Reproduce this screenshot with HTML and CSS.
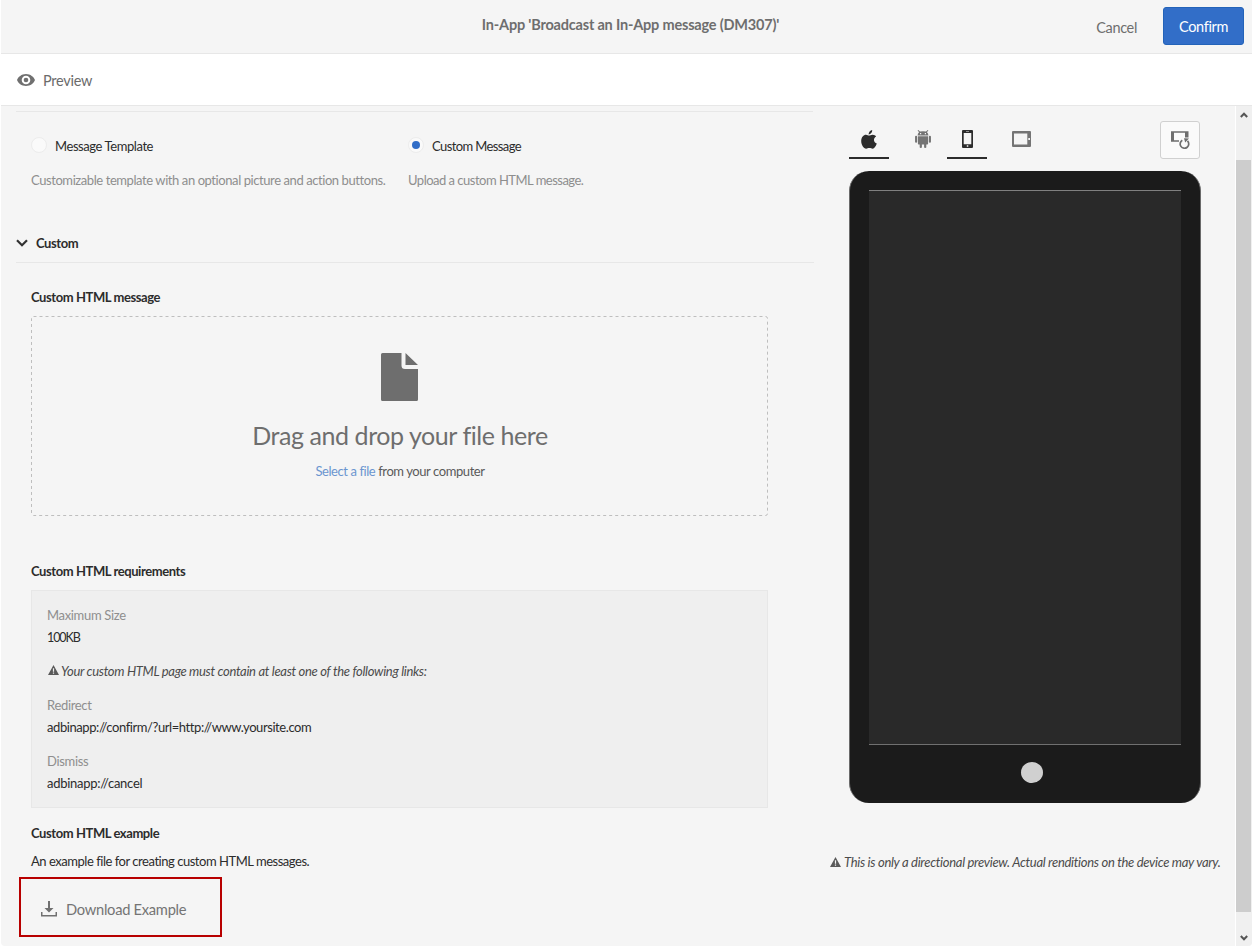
FILE: index.html
```html
<!DOCTYPE html>
<html lang="en">
<head>
<meta charset="utf-8">
<title>In-App message</title>
<link rel="stylesheet" href="styles.css">
</head>
<body>
<div class="frame">
  <header class="header">
    <h1 class="title"><span>In-App 'Broadcast an In-App message (DM307)'</span></h1>
    <div class="actions">
      <button class="cancel">Cancel</button>
      <button class="confirm">Confirm</button>
    </div>
  </header>
  <nav class="toolbar">
    <svg class="eye" width="18" height="12" viewBox="0 0 18 12"><path fill="#707070" fill-rule="evenodd" d="M9 0C4.600 0 1 3 0 6c1 3 4.600 6 9 6s8-3 9-6c-1-3-4.600-6-9-6zm0 1.700a4.300 4.300 0 1 1 0 8.600a4.300 4.300 0 0 1 0-8.600z"/><circle cx="9" cy="6" r="2.300" fill="#707070"/></svg>
    <span class="preview-label">Preview</span>
  </nav>
  <div class="body">
    <main class="main">
      <div class="choices">
        <label class="choice"><span class="radio"></span><span class="choice-name">Message Template</span></label>
        <label class="choice"><span class="radio on"></span><span class="choice-name cm">Custom Message</span></label>
        <p class="hint tpl">Customizable template with an optional picture and action buttons.</p>
        <p class="hint up">Upload a custom HTML message.</p>
      </div>
      <div class="section">
        <svg class="chev" width="12" height="8" viewBox="0 0 12 8"><path d="M1 1.200l5 5 5-5" fill="none" stroke="#323232" stroke-width="2.200"/></svg>
        <span>Custom</span>
      </div>
      <div class="fields">
        <h2 class="label lm"><span>Custom HTML message</span></h2>
        <div class="drop">
          <svg class="border" width="738" height="201"><rect x=".5" y=".5" width="736" height="199" rx="2" fill="none" stroke="#bebebe" stroke-dasharray="3 3"/></svg>
          <svg class="file" width="37" height="48" viewBox="0 0 37 48"><path fill="#6e6e6e" d="M1.500 0H20.500V12.500Q20.500 16 24 16H37V46.500Q37 48 35.500 48H1.500Q0 48 0 46.500V1.500Q0 0 1.500 0zM24.500 0L37 12H24.500z"/></svg>
          <p class="drag"><span>Drag and drop your file here</span></p>
          <p class="select"><a>Select a file</a> from your computer</p>
        </div>
        <h2 class="label lr"><span>Custom HTML requirements</span></h2>
        <div class="reqs">
          <p class="k k1">Maximum Size</p>
          <p class="v v1">100KB</p>
          <p class="warn w1"><svg width="11" height="10" viewBox="0 0 11 10"><path fill="#5a5a5a" fill-rule="evenodd" d="M5.500 0L11 10H0zM4.900 3.300h1.200v3.400H4.900zM4.900 7.600h1.200v1.200H4.900z"/></svg><span>Your custom HTML page must contain at least one of the following links:</span></p>
          <p class="k k2">Redirect</p>
          <p class="v v2">adbinapp://confirm/?url=http://www.yoursite.com</p>
          <p class="k k3">Dismiss</p>
          <p class="v v3">adbinapp://cancel</p>
        </div>
        <h2 class="label le"><span>Custom HTML example</span></h2>
        <p class="example">An example file for creating custom HTML messages.</p>
      </div>
      <div class="download">
        <svg width="16" height="16" viewBox="0 0 16 16"><path fill="#707070" d="M7 0h2v7h3.500L8 11.500 3.500 7H7zM0 11h1.500v3h13v-3H16v4.500H0z"/></svg>
        <span>Download Example</span>
      </div>
    </main>
    <aside class="side">
      <div class="tabs">
        <div class="tab active"><svg width="16" height="19" viewBox="0 0 16 19"><path fill="#2c2c2c" d="M11.200 0c.2 2.400-1.500 4.300-3.600 4.400C7.500 2.300 9.200.5 11.200 0zM8 5.600c1 0 1.900-.9 3.700-.9 1.500 0 2.700.8 3.400 1.800-3.200 1.900-2.600 5.900.7 7.100-1 2.700-2.400 5.100-4.200 5.100-1.100 0-1.700-.7-3.200-.7s-2.100.7-3.200.7C2.600 18.700.2 14.800.2 11.100c0-3.900 2.400-6.300 4.800-6.300 1.300 0 2.200.8 3 .8z"/></svg></div>
        <div class="tab and"><svg width="16" height="18" viewBox="0 0 16 18"><path fill="#747474" fill-rule="evenodd" d="M2.600.3l.7-.3 1.700 1.600Q8 .9 11 1.600L12.700 0l.7.300-1.400 2Q13.400 3.500 13.400 5.400H2.600Q2.600 3.500 4 2.300zM5 3v1.200h1.200V3zm4.800 0v1.200H11V3zM2.900 6.200h10.200v7.500q0 .8-.8.800h-1v2.700q0 .8-1.100.8t-1.100-.8v-2.700H6.900v2.700q0 .8-1.100.8t-1.100-.8v-2.700h-1q-.8 0-.8-.8z"/><path d="M1.100 6.700v5M14.900 6.700v5" stroke="#747474" stroke-width="2.100" stroke-linecap="round"/></svg></div>
        <div class="tab active ph"><svg width="11" height="18" viewBox="0 0 11 18"><path fill="#2c2c2c" fill-rule="evenodd" d="M1 0h9q1 0 1 1v16q0 1-1 1H1q-1 0-1-1V1Q0 0 1 0zM1.700 3v11.300h7.600V3zM4.800 15.200v1.600h1.500v-1.600zM4 1.200v.6h3v-.6z"/></svg></div>
        <div class="tab tb"><svg width="19" height="16" viewBox="0 0 19 16"><path fill="#747474" fill-rule="evenodd" d="M1 0h17q1 0 1 1v14q0 1-1 1H1q-1 0-1-1V1Q0 0 1 0zM2 2.500v11h13.300v-11zM16.300 7v2H18V7z"/></svg></div>
        <button class="rotate"><svg width="20" height="20" viewBox="0 0 20 20"><path fill="#6e6e6e" fill-rule="evenodd" d="M1 1.200h17.500v6.300h-3.500V2.800H4v7.400h5v1.600H1z"/><path d="M12.300 10.200a4.300 4.300 0 1 0 5.200.7" fill="none" stroke="#6e6e6e" stroke-width="1.700"/><path d="M14 8.300l5 .2-3.800 4z" fill="#6e6e6e"/></svg></button>
      </div>
      <div class="phone"><div class="screen"></div><div class="home"></div></div>
      <p class="warn w2"><svg width="11" height="10" viewBox="0 0 11 10"><path fill="#5a5a5a" fill-rule="evenodd" d="M5.500 0L11 10H0zM4.900 3.300h1.200v3.400H4.900zM4.900 7.600h1.200v1.200H4.900z"/></svg><span>This is only a directional preview. Actual renditions on the device may vary.</span></p>
    </aside>
    <div class="scroll">
      <svg width="8" height="6" viewBox="0 0 8 6"><path d="M.8 5L4 1.700 7.200 5" fill="none" stroke="#555" stroke-width="2"/></svg>
      <div class="thumb"></div>
      <svg width="8" height="6" viewBox="0 0 8 6"><path d="M.8 1L4 4.300 7.200 1" fill="none" stroke="#555" stroke-width="2"/></svg>
    </div>
  </div>
</div>
</body>
</html>
```
FILE: styles.css
```css
* { box-sizing: border-box; }
body { margin: 0; background: #fff; font: 13px/20px Lato, "Open Sans", sans-serif; letter-spacing: -.42px; color: #2c2c2c; overflow: hidden; white-space: nowrap; }
h1, h2, p { margin: 0; font-size: inherit; }
button { font: inherit; letter-spacing: inherit; padding: 0; }
svg { display: block; flex: none; }
.frame { width: 1251px; height: 946px; margin-left: 1px; background: #f5f5f5; border-radius: 0 0 4px 4px; overflow: hidden; }
.header { height: 54px; border-bottom: 1px solid #e7e7e7; display: grid; grid-template-columns: 1fr 300px 1fr; }
.title { grid-column: 2; display: flex; justify-content: center; font-size: 14.5px; letter-spacing: -.19px; line-height: 50px; font-weight: 700; color: #6e6e6e; margin-left: 8px; }
.actions { display: flex; justify-content: flex-end; align-items: flex-start; gap: 26px; padding: 7px 8px 0 0; font-size: 14.5px; letter-spacing: -.35px; }
.cancel { border: 0; background: none; color: #6e6e6e; height: 38px; line-height: 38px; padding-top: 2px; }
.confirm { width: 81px; height: 38px; background: #326ec8; border: 1px solid #2363b9; border-radius: 3px; color: #fff; padding-top: 2px; }
.toolbar { height: 52px; background: #fff; border-bottom: 1px solid #e7e7e7; display: flex; padding-left: 16px; gap: 8px; font-size: 14.5px; letter-spacing: -.25px; line-height: 54px; color: #6b6b6b; }
.eye { margin-top: 20px; }
.body { display: flex; height: 840px; }
.main { width: 813px; padding: 5px 0 0 15px; }
.choices { border-top: 1px solid #e7e7e7; width: 797px; height: 120px; padding: 24px 0 0 15px; display: grid; grid-template-columns: 377px 1fr; grid-template-rows: 34px 20px; align-content: start; }
.choice { display: flex; gap: 8px; height: 20px; }
.cm { letter-spacing: -.6px; }
.radio { width: 16px; height: 16px; border-radius: 50%; border: 1px solid #ececec; background: #fafafa; margin-top: 1px; display: grid; place-items: center; }
.on::after { content: ""; width: 8px; height: 8px; border-radius: 50%; background: #326ec8; }
.hint { color: #8e8e8e; }
.up { letter-spacing: -.51px; }
.section { height: 32px; width: 798px; border-bottom: 1px solid #e7e7e7; display: flex; gap: 8px; font-weight: 700; line-height: 25px; }
.chev { margin-top: 8px; }
.fields { width: 738px; margin-left: 15px; }
.label { font-size: 13px; line-height: 20px; font-weight: 700; }
.lm { padding-top: 24px; }
.drop { position: relative; margin-top: 9px; height: 201px; padding-top: 37px; display: flex; flex-direction: column; align-items: center; }
.border { position: absolute; left: 0; top: 0; }
.file { margin-right: .5px; }
.drag { margin-top: 16px; font-size: 25px; letter-spacing: -.43px; line-height: 36px; color: #6e6e6e; }
.select { margin-top: 8px; color: #5a5a5a; }
.select a { color: #6b95d0; }
.lr { margin-top: 44px; }
.reqs { margin-top: 9px; width: 737px; height: 218px; background: #efefef; border: 1px solid #e7e7e7; padding: 13px 15px 0; line-height: 22px; }
.k { color: #8e8e8e; letter-spacing: -.33px; }
.v1 { font-size: 12.5px; letter-spacing: -1.1px; height: 22px; padding-top: 1px; }
.v3 { letter-spacing: -.27px; }
.w1, .k2, .k3 { margin-top: 12px; }
.warn { font-style: italic; letter-spacing: -.31px; color: #4b4b4b; display: flex; gap: 2px; }
.warn svg { margin: 5px 0 0 1px; }
.le { margin-top: 15px; }
.example { margin-top: 8px; letter-spacing: -.47px; }
.download { margin: 6px 0 0 3px; width: 203px; height: 60px; border: 2px solid #b80000; display: flex; gap: 9px; align-items: center; padding: 4px 0 0 20px; font-size: 14.7px; letter-spacing: -.28px; color: #747474; }
.side { width: 421px; padding: 15px 0 0 35px; }
.tabs { display: flex; height: 38px; }
.tab { width: 40px; height: 38px; display: flex; justify-content: center; padding-top: 9px; }
.active { border-bottom: 2px solid #2c2c2c; }
.and { margin: 0 4px 0 14px; }
.ph { padding-left: 1px; }
.tb { margin-left: 14px; padding-top: 10px; }
.rotate { width: 40px; height: 38px; margin-left: 119px; border: 1px solid #d0d0d0; border-radius: 3px; background: #fafafa; display: grid; place-items: center; }
.phone { width: 352px; height: 632px; margin: 12px 0 0; border: solid #6a6a6a; border-width: 0 1px; border-radius: 20px; background: #1b1b1b; display: flex; flex-direction: column; align-items: center; padding-top: 19px; }
.screen { width: 312px; height: 555px; background: #292929; border-top: 1px solid #808080; border-bottom: 1px solid #707070; }
.home { width: 22px; height: 21px; border-radius: 50%; background: #d0d0d0; margin: 17px 0 0 14px; }
.w2 { margin: 49px 0 0 -20px; letter-spacing: -.3px; gap: 3px; }
.scroll { width: 17px; height: 840px; border-left: 1px solid #fff; background: #f0f0f0; display: flex; flex-direction: column; align-items: center; padding: 6px 1px 0 0; }
.thumb { width: 15px; height: 752px; background: #cdcdcd; margin: 42px 0 23px; }
```
